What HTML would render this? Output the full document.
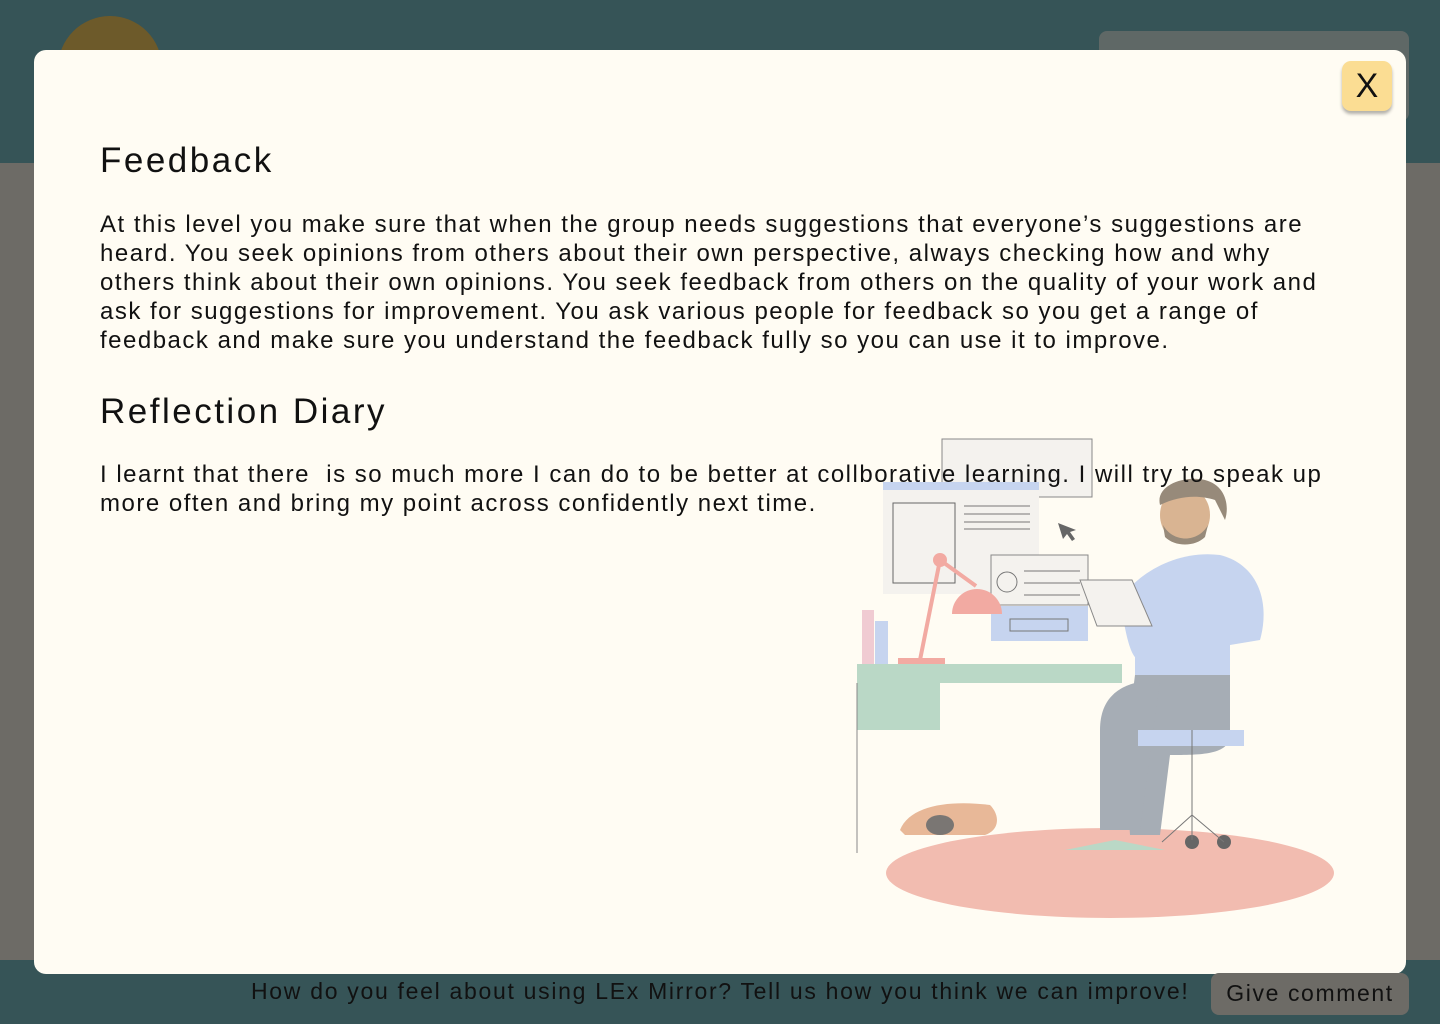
<!DOCTYPE html>
<html><head><meta charset="utf-8"><style>
*{margin:0;padding:0;box-sizing:border-box}
body{width:1440px;height:1024px;overflow:hidden;position:relative;background:#6d6b66;font-family:"Liberation Sans",sans-serif;color:#111}
.top{position:absolute;left:0;top:0;width:1440px;height:163px;background:#365457}
.bot{position:absolute;left:0;top:960px;width:1440px;height:64px;background:#365457}
.logo{position:absolute;left:58px;top:16px;width:104px;height:104px;border-radius:50%;background:#6d5a2a}
.tbtn{position:absolute;left:1099px;top:31px;width:310px;height:90px;border-radius:8px;background:#5f6866}
.modal{position:absolute;left:34px;top:50px;width:1372px;height:924px;background:#fffcf3;border-radius:12px}
.x{position:absolute;left:1342px;top:61px;width:50px;height:50px;border-radius:9px;background:#fbdd93;box-shadow:0 3px 3px rgba(0,0,0,.3);font-size:34px;text-align:center;line-height:50px}
h2{position:absolute;font-weight:normal;font-size:35px;left:100px;letter-spacing:2.5px}
p{position:absolute;left:100px;font-size:24px;line-height:29px;letter-spacing:1.5px}
.foot{position:absolute;left:251px;top:978px;font-size:23px;color:#111;letter-spacing:1.7px;white-space:nowrap}
.gc{position:absolute;left:1211px;top:973px;width:198px;height:42px;border-radius:8px;background:#6d6b66;font-size:23px;text-align:center;line-height:40px;color:#111;letter-spacing:1.6px}
</style></head><body>
<div class="top"></div><div class="bot"></div>
<div class="logo"></div><div class="tbtn"></div>
<div class="modal"></div>
<svg style="position:absolute;left:840px;top:430px" width="520" height="500" viewBox="0 0 520 500">
<rect x="102" y="9" width="150" height="58" fill="#f4f2ee" stroke="#888"/>
<rect x="43" y="52" width="156" height="112" fill="#f4f2ee"/>
<rect x="43" y="52" width="156" height="8" fill="#c6d4ef"/>
<rect x="53" y="73" width="62" height="80" fill="none" stroke="#666"/>
<path d="M124 76h66M124 84h66M124 92h66M124 99h66" stroke="#777"/>
<path d="M218 93l18 7-6 2 5 7-3 2-5-7-4 5z" fill="#666"/>
<rect x="151" y="125" width="97" height="50" fill="#f4f2ee" stroke="#888"/>
<circle cx="167" cy="152" r="10" fill="none" stroke="#777"/>
<path d="M184 141h56M184 153h56M184 165h56" stroke="#777"/>
<rect x="151" y="176" width="97" height="35" fill="#c6d4ef"/>
<rect x="170" y="189" width="58" height="12" fill="none" stroke="#777"/>
<path d="M100 130l-20 100M100 130l36 26" stroke="#f2aaa2" stroke-width="4"/>
<circle cx="100" cy="130" r="7" fill="#f2aaa2"/>
<path d="M112 184a22 22 0 0 1 50 0z" fill="#f2aaa2"/>
<rect x="58" y="228" width="47" height="6" fill="#f2aaa2"/>
<rect x="22" y="180" width="12" height="54" fill="#f0cbd2"/>
<rect x="35" y="191" width="13" height="43" fill="#c6d4ef"/>
<rect x="17" y="234" width="265" height="19" fill="#bad8c6"/>
<rect x="17" y="253" width="83" height="47" fill="#bad8c6"/>
<path d="M17 253v170" stroke="#888"/>
<ellipse cx="270" cy="443" rx="224" ry="45" fill="#f2bcb0"/>
<path d="M280 170c20-30 60-50 100-45 40 10 50 50 40 85l-60 10-60 10c-10 0-15-30-20-60z" fill="#c6d4ef"/>
<rect x="295" y="200" width="95" height="45" fill="#c6d4ef"/>
<path d="M295 245h95l0 60c0 20-30 20-60 20l-10 80h-30l-5-80z" fill="#a6adb5"/>
<path d="M260 300c0-40 30-50 60-50l-20 150h-40z" fill="#a6adb5"/>
<rect x="298" y="300" width="106" height="16" fill="#c6d4ef"/>
<ellipse cx="345" cy="85" rx="25" ry="28" fill="#d9b492"/>
<path d="M320 75c-5-20 25-30 45-25 20 5 25 25 20 40l-10-20c-15-5-35-5-55 5z" fill="#978a7a"/>
<path d="M323 95c10 18 35 18 45 0l-3 12c-10 10-30 10-40 0z" fill="#978a7a"/>
<path d="M240 150l52 0 20 46h-55z" fill="#f4f2ee" stroke="#888"/>
<path d="M60 400c10-25 50-30 90-25 10 10 10 25-5 30h-80z" fill="#e8b898"/>
<ellipse cx="100" cy="395" rx="14" ry="10" fill="#7a7673"/>
<path d="M225 420l50-10 50 10z" fill="#bad8c6"/>
<circle cx="352" cy="412" r="7" fill="#666"/><circle cx="384" cy="412" r="7" fill="#666"/>
<path d="M352 300v110M352 385l-30 27M352 385l32 27" stroke="#777"/>
</svg>
<div class="x">X</div>
<h2 style="top:141px">Feedback</h2>
<p style="top:210px;width:1245px">At this level you make sure that when the group needs suggestions that everyone’s suggestions are heard. You seek opinions from others about their own perspective, always checking how and why others think about their own opinions. You seek feedback from others on the quality of your work and ask for suggestions for improvement. You ask various people for feedback so you get a range of feedback and make sure you understand the feedback fully so you can use it to improve.</p>
<h2 style="top:392px">Reflection Diary</h2>
<p style="top:460px;width:1245px">I learnt that there&nbsp; is so much more I can do to be better at collborative learning. I will try to speak up more often and bring my point across confidently next time.</p>
<div class="foot">How do you feel about using LEx Mirror? Tell us how you think we can improve!</div>
<div class="gc">Give comment</div>
</body></html>
